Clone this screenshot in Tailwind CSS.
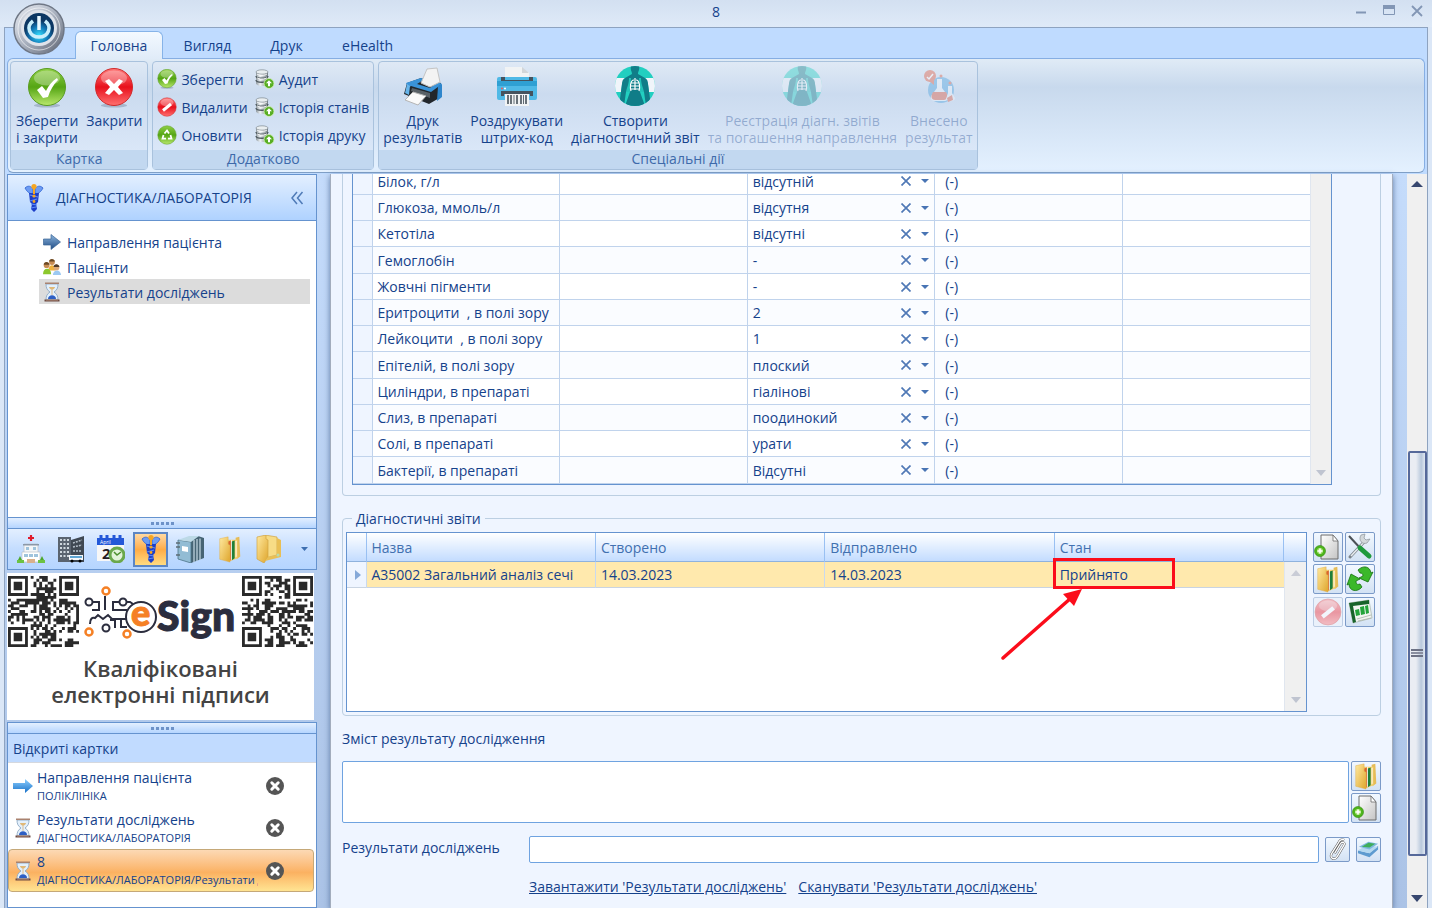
<!DOCTYPE html>
<html lang="uk">
<head>
  <meta charset="UTF-8" />
  <meta name="viewport" content="width=device-width, initial-scale=1.0"/>
  <title>8</title>
  <script src="https://cdn.jsdelivr.net/npm/@tailwindcss/browser@4"></script>
</head>
<body class="h-screen overflow-hidden flex flex-col bg-[#dbe7f7] text-[#15428b] text-sm leading-[17px] font-['Open_Sans','Noto_Sans',sans-serif]">

  <!-- Shared icons -->
  <svg class="absolute size-0" aria-hidden="true">
    <defs>
      <linearGradient id="gGreen" x2="0" y2="1"><stop offset="0" stop-color="#8fcf45"/><stop offset=".5" stop-color="#55a514"/><stop offset="1" stop-color="#b9e86c"/></linearGradient>
      <linearGradient id="gRed" x2="0" y2="1"><stop offset="0" stop-color="#ff7a7a"/><stop offset=".5" stop-color="#e8101c"/><stop offset="1" stop-color="#ff7070"/></linearGradient>
      <linearGradient id="gBlue" x2="0" y2="1"><stop offset="0" stop-color="#8db5dd"/><stop offset="1" stop-color="#1f4c85"/></linearGradient>
      <linearGradient id="gSky" x2="0" y2="1"><stop offset="0" stop-color="#8fd0ff"/><stop offset="1" stop-color="#1670c8"/></linearGradient>
      <linearGradient id="gGold" x2="1" y2="1"><stop offset="0" stop-color="#ffe9a0"/><stop offset="1" stop-color="#dfa62c"/></linearGradient>
      <linearGradient id="gPage" x2="1" y2="1"><stop offset="0" stop-color="#fff"/><stop offset="1" stop-color="#c4c4c4"/></linearGradient>
      <linearGradient id="gSteel" x2="1"><stop offset="0" stop-color="#8d979d"/><stop offset=".35" stop-color="#eef2f4"/><stop offset="1" stop-color="#6f7a80"/></linearGradient>
      <linearGradient id="gOrb" x2="1" y2="1"><stop offset="0" stop-color="#eef1f7"/><stop offset=".5" stop-color="#a9b1bf"/><stop offset="1" stop-color="#5d6472"/></linearGradient>
      <radialGradient id="gCore" cy=".75"><stop offset="0" stop-color="#35e0ff"/><stop offset=".6" stop-color="#1277b5"/><stop offset="1" stop-color="#0c3763"/></radialGradient>
      <clipPath id="round"><circle cx="20" cy="20" r="20"/></clipPath>
    </defs>
    <symbol id="ok" viewBox="0 0 40 40">
      <ellipse cx="20" cy="37.500" rx="13" ry="2" fill="#7d90a8" opacity=".5"/>
      <circle cx="20" cy="19" r="18.500" fill="url(#gGreen)" stroke="#5a9c22"/>
      <ellipse cx="20" cy="10" rx="13" ry="7.500" fill="#fff" opacity=".3"/>
      <path d="M10 22l5-4 4 5c3-6 6-10 11-13l1 2c-4 4-8 10-10 17l-5 1z" fill="#fff"/>
    </symbol>
    <symbol id="no" viewBox="0 0 40 40">
      <ellipse cx="20" cy="37.500" rx="13" ry="2" fill="#7d90a8" opacity=".5"/>
      <circle cx="20" cy="19" r="18.500" fill="url(#gRed)" stroke="#d02a2a"/>
      <ellipse cx="20" cy="10" rx="13" ry="7.500" fill="#fff" opacity=".3"/>
      <path d="M11 13l4-2 5 5 5-5 4 2-5 6 5 6-4 2-5-5-5 5-4-2 5-6z" fill="#fff"/>
    </symbol>
    <symbol id="ban" viewBox="0 0 40 40">
      <circle cx="20" cy="20" r="18.500" fill="url(#gRed)" stroke="#d02a2a"/>
      <ellipse cx="20" cy="11" rx="13" ry="7.500" fill="#fff" opacity=".3"/>
      <path d="M12 27L28 14" stroke="#fff" stroke-width="6"/>
    </symbol>
    <symbol id="recycle" viewBox="0 0 40 40">
      <circle cx="20" cy="20" r="18.500" fill="url(#gGreen)" stroke="#5a9c22"/>
      <g fill="none" stroke="#fff" stroke-width="3.500"><path d="M15 17l5-6 4 6"/><path d="M27 20l2 7h-7"/><path d="M18 27h-7l2-7"/></g>
    </symbol>
    <symbol id="db" viewBox="0 0 20 20">
      <path d="M1 3v11c0 4 12 4 12 0V3z" fill="url(#gSteel)"/>
      <ellipse cx="7" cy="3" rx="6" ry="2.200" fill="#e9eef0" stroke="#7f8a90" stroke-width=".7"/>
      <path d="M1 7c0 3 12 3 12 0M1 11c0 3 12 3 12 0" fill="none" stroke="#4d585e" stroke-width="1.300"/>
      <path d="M2 8.500c1 2 9 2 10 0M2 4.800c1 2 9 2 10 0" fill="none" stroke="#fff"/>
      <circle cx="14" cy="14.500" r="5" fill="#58ae24" stroke="#d8f3c0" stroke-width=".8"/>
      <path d="M14 11.200l3 3h-2v3h-2v-3h-2z" fill="#fff"/>
    </symbol>
    <symbol id="printer" viewBox="0 0 40 40">
      <path d="M4 17l14-5 20 5v14l-12 7L1 28z" fill="#22272c"/>
      <path d="M3 17l15-5 4 1-8 5 13 4 8-6 4 2-11 8-20-6-3 2z" fill="#3a93d8"/>
      <path d="M35 20l4-2v13l-5 4z" fill="#2e86cc"/>
      <path d="M24 3l10-1 3 14-10 5-9-4z" fill="#f3f3f3" stroke="#c4c4c4"/>
      <path d="M9 22l18 5v5L8 25z" fill="#596167"/>
      <path d="M10 26l13 4-8 9-13-5z" fill="#fafafa" stroke="#b5b5b5"/>
      <path d="M4 18l-2 9 4 2 1-9z" fill="#66b4ea"/>
    </symbol>
    <symbol id="barcode" viewBox="0 0 40 40">
      <path d="M8 1h17v5h7v9H8z" fill="#f1f3f4"/><path d="M25 1l7 6h-7z" fill="#d2d6d9"/>
      <rect y="11" width="40" height="23" rx="2" fill="#4fb9e6"/>
      <rect y="15" width="40" height="5" fill="#2fa0d3"/>
      <path d="M4 11h4v3h24v-3h4v4H4zM4 25h32v5h-3v-2H7v2H4z" fill="#45535e"/>
      <circle cx="5" cy="22.500" r="1" fill="#ed5c5c"/><circle cx="8" cy="22.500" r="1" fill="#fff"/>
      <path d="M8 28h24v12H8z" fill="#f1f3f4"/>
      <path d="M11 29v9M14 29v9M20 29v9M24 29v9M29 29v9" stroke="#3c4850" stroke-width="1.500"/><path d="M17 29v9M26.500 29v9" stroke="#3c4850" stroke-width=".8"/>
    </symbol>
    <symbol id="xray" viewBox="0 0 40 40">
      <g clip-path="url(#round)">
        <path d="M0 0h40v40H0z" fill="#22cfc0"/><path d="M0 12h40v14H0z" fill="#f0f5fa"/>
        <path d="M10 12h20l3 6 1 8H6l1-8z" fill="#22c3b8"/>
        <path d="M16 0h8c1 4-1 5-1 8l7 4H10l7-4c0-3-2-4-1-8z" fill="#107d88"/>
        <path d="M10 12h4c0 6-2 9-3 14L9 40H4l3-22c0-3 1-5 3-6zM30 12h-4c0 6 2 9 3 14l2 14h5l-3-22c0-3-1-5-3-6z" fill="#107d88"/>
        <path d="M16 12h8l1 14 5 14H10l5-14z" fill="#107d88"/>
        <g fill="none" stroke="#fff" stroke-width="1.200"><path d="M20 12v12M19 14c-4 0-4 8-3 11M21 14c4 0 4 8 3 11M16 17h8M15 20h10M16 23h8"/></g>
      </g>
    </symbol>
    <symbol id="flask" viewBox="0 0 40 40">
      <circle cx="22" cy="24" r="13" fill="#5aa9e0"/>
      <path d="M18 13h5v9l6 8c1 3-1 5-4 5h-9c-3 0-5-2-4-5l6-8z" fill="#eef4fb"/>
      <path d="M14 26h13c3 5 0 8-2 8h-9c-3 0-5-3-2-8z" fill="#e2684f"/>
      <path d="M29 20h4v7l3 5c0 4-7 4-9 1l2-6z" fill="#eef4fb"/><path d="M28 32l5-3 1 5-5 2z" fill="#e2684f"/>
      <circle cx="11" cy="10" r="6" fill="#e2684f"/><path d="M10 15l5 4v-7z" fill="#e2684f"/><path d="M8 11l2 2 4-5" fill="none" stroke="#fff" stroke-width="1.500"/>
      <circle cx="22" cy="10" r="1.500" fill="#e2684f"/><circle cx="31" cy="17" r="1.500" fill="#e2684f"/>
    </symbol>
    <symbol id="caduceus" viewBox="0 0 20 30">
      <path d="M1 5c3-3 6-2 8 1v5C6 11 3 9 1 5zM19 5c-3-3-6-2-8 1v5c3 0 6-2 8-6z" fill="#6c9bf3" stroke="#2a5fd0" stroke-width=".8"/>
      <path d="M5 10h10l-1 9-2 2 1 5-3 3-3-3 1-5-2-2z" fill="#1c3fc8"/>
      <path d="M6 12l8 2M6 18l7-2M7 21l6 1M7 25l5-1" stroke="#5f8cf5" stroke-width="1.200"/>
      <circle cx="10" cy="3.500" r="2.600" fill="#f5a623"/><path d="M9 5h2v6H9z" fill="#f5a623"/><circle cx="10" cy="13" r="1.600" fill="#f5a623"/><circle cx="10" cy="18.500" r="1.400" fill="#f5a623"/>
    </symbol>
    <symbol id="hourglass" viewBox="0 0 18 20">
      <path d="M3 2h12c0 4-1 6-4 8 3 2 4 4 4 8H3c0-4 1-6 4-8-3-2-4-4-4-8z" fill="#e3f0fc" stroke="#8fa9c4" stroke-width=".9"/>
      <path d="M6 5h6c0 1-1 2-3 3-2-1-3-2-3-3z" fill="#e0b878"/><path d="M9 8v5" stroke="#d9aa62" stroke-width=".7"/>
      <path d="M5 17c0-5 8-5 8 0z" fill="#2d5fc4"/>
      <path d="M2 .5h14v1.500H2z" fill="#a9826f"/><path d="M1.500 17.500h15v2h-15z" fill="#6c4a42"/><path d="M3 17.800h12v.6H3z" fill="#c99f88"/>
    </symbol>
    <symbol id="people" viewBox="0 0 20 18">
      <path d="M6 13c0-8 8-8 8 0z" fill="#f0b23e"/><circle cx="10" cy="3.500" r="3.200" fill="#c98d55"/><path d="M6.800 3c0-4 6-4 6.400 0z" fill="#6b4a25"/>
      <path d="M0 17c0-8 9-8 9 0z" fill="#8cc82c"/><circle cx="4" cy="7" r="3.200" fill="#c98d55"/><path d="M.8 6.500c0-4 6-4 6.400 0z" fill="#6b4a25"/>
      <path d="M11 18c0-7 9-7 9 0z" fill="#9cc9f2"/><circle cx="15" cy="9.500" r="3.200" fill="#dba877"/><path d="M11.800 9c0-4 6-4 6.400 0z" fill="#4e3a2a"/>
    </symbol>
    <symbol id="folder" viewBox="0 0 28 30">
      <path d="M20 3l4-1 1 21-4 3z" fill="#e6bc57"/><path d="M11 5h11v20l-8 3z" fill="#f3cf6c"/>
      <path d="M12 7l3-1v21l-3 1z" fill="#d9652c"/><path d="M15 6l1-1v21l-1 1z" fill="#fff"/><path d="M16 7l3-1v19l-3 2z" fill="#1f7f3a"/><path d="M20 7l1-1v17l-1 1z" fill="#fff"/>
      <path d="M3 4l9-2v8l2 1v18L3 26z" fill="url(#gGold)" stroke="#e0b04a" stroke-width=".5"/>
    </symbol>
    <symbol id="addpage" viewBox="0 0 28 28">
      <path d="M7 2h12l5 6v18H7z" fill="url(#gPage)" stroke="#6d6d6d"/><path d="M19 2v6h5z" fill="#fff" stroke="#6d6d6d" stroke-width=".8"/>
      <circle cx="6" cy="18" r="5.500" fill="#4fb51c" stroke="#2f8a0c" stroke-width=".6"/><circle cx="6" cy="18" r="3" fill="#a7e375"/><path d="M3.500 18h5M6 15.500v5" stroke="#fff" stroke-width="1.600"/>
    </symbol>
    <symbol id="closecard" viewBox="0 0 18 18">
      <circle cx="9" cy="9" r="9" fill="#555"/><path d="M5.800 5.800l6.400 6.400M12.200 5.800l-6.400 6.400" stroke="#fff" stroke-width="3" stroke-linecap="round"/>
    </symbol>
  </svg>

  <!-- Title bar -->
  <header class="relative h-[27px] shrink-0 flex items-center justify-center bg-linear-to-b from-[#d3e0f1] to-[#dfeaf8]">
    <h1 class="pb-1">8</h1>
    <div class="absolute right-[7px] top-1 flex items-center gap-3 text-[#8296b5]">
      <button aria-label="Згорнути" class="w-4 h-3.5"><svg viewBox="0 0 16 14"><path d="M3 8.500h10" stroke="currentColor" stroke-width="2"/></svg></button>
      <button aria-label="Розгорнути" class="w-4 h-3.5"><svg viewBox="0 0 16 14"><path d="M2.500 1.500h11v9h-11z" fill="none" stroke="currentColor"/><path d="M2 1h12v4H2z" fill="currentColor"/></svg></button>
      <button aria-label="Закрити вікно" class="w-4 h-3.5"><svg viewBox="0 0 16 14"><path d="M3 2l10 10M13 2L3 12" stroke="currentColor" stroke-width="1.800"/></svg></button>
    </div>
    <!-- Application button -->
    <button aria-label="Меню" class="absolute left-[13px] top-[3px] z-10 size-[52px]">
      <svg viewBox="0 0 52 52">
        <circle cx="26" cy="26" r="25" fill="url(#gOrb)" stroke="#6f7785" stroke-width="1.500"/>
        <circle cx="26" cy="26" r="21" fill="none" stroke="#fff" stroke-width="1" opacity=".6"/>
        <circle cx="26" cy="25" r="18" fill="#dfe3ea"/>
        <circle cx="26" cy="25" r="15" fill="url(#gCore)"/>
        <path d="M20 18c-8 6-3 16 6 16s14-10 6-16" fill="none" stroke="#c9effc" stroke-width="3.500"/>
        <path d="M26 13v14" stroke="#e8f8ff" stroke-width="3.500"/>
      </svg>
    </button>
  </header>

  <div class="flex-1 min-h-0 flex flex-col mx-1 border-t border-x border-[#8ea3c0] bg-[#bfdbff]">
    <!-- Tabs -->
    <nav class="h-[30px] shrink-0 flex items-end pl-[70px]">
      <button class="relative z-10 -mb-px w-[88px] h-7 rounded-t-md border border-b-0 border-[#86b3e8] bg-linear-to-b from-[#f3f9ff] to-[#e0ebf8]">Головна</button>
      <button class="w-[89px] h-7 pt-0.5">Вигляд</button>
      <button class="w-[69px] h-7 pt-0.5">Друк</button>
      <button class="w-[93px] h-7 pt-0.5">eHealth</button>
    </nav>

    <!-- Ribbon -->
    <section class="mx-0.5 h-[115px] shrink-0 flex gap-1 p-0.5 rounded-md border border-[#86aee3] border-b-[#7f9fc6] bg-linear-to-b from-[#e0ebf6] from-0% via-[#c8d9ed] via-25% to-[#e4f1ff]">
      <div class="flex flex-col rounded border border-[#a9c2dd] bg-linear-to-b from-[#dfe9f5] via-[#cbdbef] via-30% to-[#dfebfb]">
        <div class="flex-1 flex gap-2 px-[5px] pt-1.5">
          <button class="flex flex-col items-center text-left"><svg class="size-10 mb-1"><use href="#ok"/></svg>Зберегти<br>і закрити</button>
          <button class="flex flex-col items-center"><svg class="size-10 mb-1"><use href="#no"/></svg>Закрити</button>
        </div>
        <h2 class="h-[19px] text-center bg-[#c2d8f0] text-[#3e6aaa]">Картка</h2>
      </div>
      <div class="flex flex-col rounded border border-[#a9c2dd] bg-linear-to-b from-[#dfe9f5] via-[#cbdbef] via-30% to-[#dfebfb]">
        <div class="flex-1 grid grid-cols-[auto_auto] content-start gap-x-[7px] px-1 pt-[3px]">
          <button class="h-7 flex items-center gap-1"><svg class="size-5"><use href="#ok"/></svg>Зберегти</button>
          <button class="h-7 flex items-center gap-1"><svg class="size-5"><use href="#db"/></svg>Аудит</button>
          <button class="h-7 flex items-center gap-1"><svg class="size-5"><use href="#ban"/></svg>Видалити</button>
          <button class="h-7 flex items-center gap-1"><svg class="size-5"><use href="#db"/></svg>Історія станів</button>
          <button class="h-7 flex items-center gap-1"><svg class="size-5"><use href="#recycle"/></svg>Оновити</button>
          <button class="h-7 flex items-center gap-1"><svg class="size-5"><use href="#db"/></svg>Історія друку</button>
        </div>
        <h2 class="h-[19px] text-center bg-[#c2d8f0] text-[#3e6aaa]">Додатково</h2>
      </div>
      <div class="flex flex-col rounded border border-[#a9c2dd] bg-linear-to-b from-[#dfe9f5] via-[#cbdbef] via-30% to-[#dfebfb]">
        <div class="flex-1 flex gap-2 px-1 pt-1">
          <button class="flex flex-col items-center"><svg class="size-10 mb-1.5"><use href="#printer"/></svg>Друк<br>результатів</button>
          <button class="flex flex-col items-center"><svg class="size-10 mb-1.5"><use href="#barcode"/></svg>Роздрукувати<br>штрих-код</button>
          <button class="flex flex-col items-center"><svg class="size-10 mb-1.5"><use href="#xray"/></svg>Створити<br>діагностичний звіт</button>
          <button disabled class="flex flex-col items-center text-[#15428b]/35"><svg class="size-10 mb-1.5 opacity-40"><use href="#xray"/></svg>Реєстрація діагн. звітів<br>та погашення направлення</button>
          <button disabled class="flex flex-col items-center text-[#15428b]/35"><svg class="size-10 mb-1.5 opacity-45"><use href="#flask"/></svg>Внесено<br>результат</button>
        </div>
        <h2 class="h-[19px] text-center bg-[#c2d8f0] text-[#3e6aaa]">Спеціальні дії</h2>
      </div>
    </section>

    <div class="flex-1 min-h-0 mt-px flex bg-linear-to-b from-[#c5dcfb] to-[#abc3e6]">
      <!-- Sidebar -->
      <aside class="w-[310px] shrink-0 ml-0.5 flex flex-col">
        <div class="h-[47px] shrink-0 flex items-center pl-4 pr-3 border border-[#6593cf] bg-linear-to-b from-[#e3efff] to-[#afd2ff]">
          <svg class="w-5 h-[30px]"><use href="#caduceus"/></svg>
          <h2 class="ml-3 flex-1">ДІАГНОСТИКА/ЛАБОРАТОРІЯ</h2>
          <button aria-label="Згорнути панель"><svg class="size-3.5" viewBox="0 0 14 14"><path d="M7 1L2 7l5 6M12.500 1l-5 6 5 6" fill="none" stroke="#4f7bb8" stroke-width="1.500"/></svg></button>
        </div>
        <ul class="h-[296px] shrink-0 pt-2 pl-[31px] pr-1.5 bg-white border-x border-[#6593cf]">
          <li><a href="#" class="h-[25px] flex items-center gap-1.5 pl-1 pt-px"><svg class="w-[18px] h-4" viewBox="0 0 18 16"><path d="M.5 5H8V.5L17.500 8 8 15.500V11H.5z" fill="url(#gBlue)" stroke="#3b6596" stroke-width=".7"/></svg>Направлення пацієнта</a></li>
          <li><a href="#" class="h-[25px] flex items-center gap-1.5 pl-1 pt-px"><svg class="w-[18px] h-[18px]"><use href="#people"/></svg>Пацієнти</a></li>
          <li><a href="#" class="h-[25px] flex items-center gap-1.5 pl-1 pt-px bg-[#dcdcdc]"><svg class="w-[18px] h-5"><use href="#hourglass"/></svg>Результати досліджень</a></li>
        </ul>
        <div class="h-[11px] shrink-0 flex items-center justify-center gap-0.5 border border-b-0 border-[#6593cf] bg-linear-to-b from-[#e3efff] to-[#b5d5ff]">
          <i class="size-[3px] bg-[#6d92c8]"></i><i class="size-[3px] bg-[#6d92c8]"></i><i class="size-[3px] bg-[#6d92c8]"></i><i class="size-[3px] bg-[#6d92c8]"></i><i class="size-[3px] bg-[#6d92c8]"></i>
        </div>
        <div class="h-[42px] shrink-0 flex items-center gap-1 pl-[5px] border border-[#6593cf] bg-linear-to-b from-[#e3efff] via-[#c4ddff] via-50% to-[#b5d5ff]">
          <button aria-label="Лікарня" class="size-9 p-1">
            <svg viewBox="0 0 28 28"><path d="M7 9h14v18H7z" fill="#f4f6f8" stroke="#b9c0c8" stroke-width=".7"/><path d="M5 17h18v10H5z" fill="#fff" stroke="#b9c0c8" stroke-width=".7"/><path d="M6 9h16v1.500H6z" fill="#8b98a8"/><path d="M9 12h3v3H9zM16 12h3v3h-3zM7 19h4v3H7zM12 19h4v3h-4zM17 19h4v3h-4z" fill="#9fc3dc"/><path d="M14 0v6M11 3h6" stroke="#e01c2c" stroke-width="2.200"/><path d="M0 27l3-6 3 6zM22 27l3-6 3 6z" fill="#4da82c"/><path d="M0 25h7v3H0zM21 25h7v3h-7z" fill="#6cc243"/><path d="M10 24h8v4h-8z" fill="#d9b08b"/></svg>
          </button>
          <button aria-label="Поліклініка" class="size-9 p-1">
            <svg viewBox="0 0 28 28"><path d="M1 2h13v25H1z" fill="#5a6470"/><path d="M14 5l13-4v26H14z" fill="#3f4852"/><path d="M3 5h9M3 9h9M3 13h9M3 17h9M3 21h9" stroke="#cfd8de" stroke-width="2" stroke-dasharray="2 1.500"/><path d="M16 8l9-3M16 12l9-2M16 16h9" stroke="#b3bec8" stroke-width="1.500" stroke-dasharray="2 1"/><path d="M12 20h14v5H12z" fill="#f4f7fa"/><path d="M13 22h12" stroke="#2c8ac4" stroke-width="1.500"/><circle cx="15" cy="26" r="1.500"/><circle cx="23" cy="26" r="1.500"/></svg>
          </button>
          <button aria-label="Розклад" class="size-9 p-1">
            <svg viewBox="0 0 28 28"><path d="M0 3h27v8H0z" fill="#2458d8"/><path d="M4 0v5M10 0v5M17 0v5M23 0v5" stroke="#2458d8" stroke-width="3"/><path d="M0 10h27v16H0z" fill="#f7f7f7"/><text x="5" y="24" font-size="15" font-weight="700" fill="#231c24">2</text><text x="3" y="9" font-size="5" fill="#fff">April</text><circle cx="20" cy="20" r="7" fill="#e2f3d8" stroke="#6aa84c" stroke-width="3"/><path d="M17 17l3 3 4-3" fill="none" stroke="#4b8f2c" stroke-width="1.500"/></svg>
          </button>
          <button aria-label="Діагностика" class="w-[35px] h-[35px] flex items-center justify-center border-2 border-[#5b86c4] bg-linear-to-b from-[#ffd9a0] via-[#ffac45] via-50% to-[#ffdb80]"><svg class="w-5 h-[30px]"><use href="#caduceus"/></svg></button>
          <button aria-label="Журнали" class="size-9 p-1">
            <svg viewBox="0 0 28 28"><path d="M9 4l13-3 6 2v20l-13 5z" fill="#466474"/><path d="M21 4v22M24 3.500V25M18 5v22" stroke="#c6dae4" stroke-width="1.200"/><path d="M2 5l13 2v21L2 24z" fill="#92bcd4" stroke="#4d7488" stroke-width=".8"/><path d="M2 5l11-4h10l-8 6z" fill="#bcd9e6"/><path d="M6 11l6 1v5l-6-1z" fill="#fff"/><path d="M0 8h4M0 12h4M0 20h4" stroke="#5c6c74" stroke-width="1.500"/></svg>
          </button>
          <button aria-label="Архів" class="size-9 p-1"><svg class="size-7"><use href="#folder"/></svg></button>
          <button aria-label="Папка" class="size-9 p-1">
            <svg viewBox="0 0 28 28"><path d="M9 0l12 2v18l-12 3z" fill="#f7dc86" stroke="#d0a444" stroke-width=".7"/><path d="M1 2l9-2v4l2 1v17l-4 6-7-4z" fill="url(#gGold)" stroke="#d0a444" stroke-width=".7"/><path d="M21 3l4 2v17l-16 4 3-4 9-2z" fill="#e9bf55"/><circle cx="22" cy="20" r="1.500" fill="#b4dcb0"/></svg>
          </button>
          <button aria-label="Ще" class="w-6 h-9 flex items-center justify-center"><svg class="w-[7px] h-1" viewBox="0 0 7 4"><path d="M0 0h7L3.500 4z" fill="#3e6fb0"/></svg></button>
        </div>
        <!-- eSign banner -->
        <div class="h-[147px] shrink-0 mt-[3px] mr-[3px] bg-white">
          <div class="flex items-center justify-between px-px pt-[3px]">
            <svg class="qr size-[71px]" viewBox="0 0 25 25" data-seed="7"></svg>
            <svg class="w-40 h-[71px]" viewBox="0 0 160 71">
              <g fill="none" stroke="#2b2d3e" stroke-width="2">
                <circle cx="60" cy="41" r="15"/><circle cx="8" cy="26" r="3.500"/><circle cx="42" cy="26" r="3.500"/><circle cx="25" cy="52" r="3.500"/>
                <path d="M12 26h6v8h-7M24 20v14M38 26h-6v8h14M9 48c0-5 2-7 5-6l3-3 5 4 5-4 4 4h14M29 44h5v8M40 43v8h6M45 26h4l3 2"/>
              </g>
              <g fill="none" stroke="#f58025" stroke-width="2.500"><circle cx="25" cy="15" r="3.500"/><circle cx="8" cy="56" r="3.500"/><circle cx="46" cy="58" r="3.500"/></g>
              <text x="50" y="50" font-size="36" font-weight="900" fill="#f58025" stroke="#f58025" font-family="Lato">e</text>
              <text x="76" y="55" font-size="41" font-weight="900" fill="#2b2d3e" stroke="#2b2d3e" font-family="Lato">Sign</text>
            </svg>
            <svg class="qr size-[71px]" viewBox="0 0 25 25" data-seed="23"></svg>
          </div>
          <p class="mt-2 text-center text-[22px] leading-[26px] font-semibold text-[#444]">Кваліфіковані<br>електронні підписи</p>
        </div>
        <div class="h-[11px] shrink-0 mt-0.5 flex items-center justify-center gap-0.5 border border-b-0 border-[#6593cf] bg-linear-to-b from-[#e3efff] to-[#b5d5ff]">
          <i class="size-[3px] bg-[#6d92c8]"></i><i class="size-[3px] bg-[#6d92c8]"></i><i class="size-[3px] bg-[#6d92c8]"></i><i class="size-[3px] bg-[#6d92c8]"></i><i class="size-[3px] bg-[#6d92c8]"></i>
        </div>
        <!-- Open cards -->
        <div class="flex-1 min-h-0 bg-white border border-[#6593cf]">
          <h2 class="h-[29px] px-[5px] flex items-center bg-[#c1dbff] border-b border-[#d5d8de]">Відкриті картки</h2>
          <ul class="pt-0.5">
            <li class="h-[42px] flex items-center pl-[5px] pr-8">
              <svg class="w-5 h-3.5 shrink-0" viewBox="0 0 20 14"><path d="M0 4h12V0l8 7-8 7v-4H0z" fill="url(#gSky)"/></svg>
              <a href="#" class="ml-1 flex-1 min-w-0">Направлення пацієнта<br><span class="text-[11px]">ПОЛІКЛІНІКА</span></a>
              <button aria-label="Закрити картку"><svg class="size-[18px]"><use href="#closecard"/></svg></button>
            </li>
            <li class="h-[42px] flex items-center pl-[5px] pr-8">
              <svg class="w-5 h-5 shrink-0"><use href="#hourglass"/></svg>
              <a href="#" class="ml-1 flex-1 min-w-0">Результати досліджень<br><span class="text-[11px]">ДІАГНОСТИКА/ЛАБОРАТОРІЯ</span></a>
              <button aria-label="Закрити картку"><svg class="size-[18px]"><use href="#closecard"/></svg></button>
            </li>
            <li class="h-[43px] mr-0.5 flex items-center pl-1 pr-[29px] rounded-sm border border-[#c5a878] bg-linear-to-b from-[#fcd9b4] via-[#fbb161] via-55% to-[#ffe492]">
              <svg class="w-5 h-5 shrink-0"><use href="#hourglass"/></svg>
              <a href="#" class="ml-1 mr-2 flex-1 min-w-0 overflow-hidden whitespace-nowrap">8<br><span class="text-[11px]">ДІАГНОСТИКА/ЛАБОРАТОРІЯ/Результати досліджень</span></a>
              <button aria-label="Закрити картку"><svg class="size-[18px]"><use href="#closecard"/></svg></button>
            </li>
          </ul>
        </div>
      </aside>

      <!-- Card content -->
      <main class="flex-1 min-w-0 ml-[13px] mr-3.5 px-[11px] bg-[#eff5ff] border-x border-[#a3adbd] shadow-[0_2px_6px_#5f7ba6] flex flex-col">
        <section class="shrink-0 overflow-hidden border border-t-0 border-[#bccfe2] rounded-b px-[9px] pb-2.5">
          <div class="mr-[39px] flex border border-t-0 border-[#6593cf]">
            <div class="flex-1">
              <!-- scrolled down by a few pixels -->
              <table class="-mt-1.5 w-full table-fixed border-collapse bg-white">
                <colgroup><col class="w-[19px]"><col><col><col><col><col></colgroup>
                <tbody id="results"></tbody>
              </table>
            </div>
            <div class="w-[21px] flex flex-col justify-end items-center pb-2 border-l border-[#e0e6ef] bg-[#f0f0f0]">
              <svg class="w-2.5 h-1.5" viewBox="0 0 10 6"><path d="M0 0h10L5 6z" fill="#bfc4d0"/></svg>
            </div>
          </div>
        </section>

        <fieldset class="shrink-0 mt-3.5 border border-[#bccfe2] rounded pl-[3px] pr-[5px] pb-[3px]">
          <legend class="ml-1.5 px-1">Діагностичні звіти</legend>
          <div class="flex gap-1.5 mt-[5px]">
            <div class="flex-1 h-[180px] flex border border-[#6593cf] bg-white">
              <div class="flex-1">
                <table class="w-full table-fixed border-collapse">
                  <colgroup><col class="w-[19px]"><col><col><col><col></colgroup>
                  <thead>
                    <tr class="h-[29px] text-left text-[#4170b0] bg-linear-to-b from-white to-[#c3dcff] border-b border-[#8fb2dd]">
                      <th class="border-r border-[#99c0f2]"></th>
                      <th class="px-[5px] pt-0.5 font-normal border-r border-[#99c0f2]">Назва</th>
                      <th class="px-[5px] pt-0.5 font-normal border-r border-[#99c0f2]">Створено</th>
                      <th class="px-[5px] pt-0.5 font-normal border-r border-[#99c0f2]">Відправлено</th>
                      <th class="px-[5px] pt-0.5 font-normal border-r border-[#99c0f2]">Стан</th>
                    </tr>
                  </thead>
                  <tbody>
                    <tr class="h-[26px] bg-[#ffe9ad] border-b border-[#c9d4e2]">
                      <td class="bg-[#eff5ff] border-r border-[#c9d9ee]"><svg class="ml-2 w-1.5 h-2.5" viewBox="0 0 6 10"><path d="M0 0l6 5-6 5z" fill="#86a9d8"/></svg></td>
                      <td class="px-[5px] whitespace-nowrap border-r border-[#c9d9ee]">A35002 Загальний аналіз сечі</td>
                      <td class="px-[5px] border-r border-[#c9d9ee]">14.03.2023</td>
                      <td class="px-[5px] border-r border-[#c9d9ee]">14.03.2023</td>
                      <td class="relative px-[5px]">Прийнято
                        <!-- Callout -->
                        <span class="absolute -left-0.5 -top-1 w-[122px] h-[31px] border-3 border-[#fb0d1b]"></span>
                        <svg class="absolute -left-14 top-[27px] w-[84px] h-[74px]" viewBox="0 0 84 74"><path d="M4 69L72 9" stroke="#fb0d1b" stroke-width="3.500" stroke-linecap="round"/><path d="M83 0L75 17 64 5z" fill="#fb0d1b"/></svg>
                      </td>
                    </tr>
                  </tbody>
                </table>
              </div>
              <div class="w-[22px] flex flex-col">
                <div class="h-[29px] bg-linear-to-b from-white to-[#c3dcff] border-b border-[#8fb2dd]"></div>
                <div class="flex-1 flex flex-col justify-between items-center py-2 border-l border-[#e0e6ef] bg-[#f0f0f0]">
                  <svg class="w-2.5 h-1.5" viewBox="0 0 10 6"><path d="M0 6h10L5 0z" fill="#c9ccd6"/></svg>
                  <svg class="w-2.5 h-1.5" viewBox="0 0 10 6"><path d="M0 0h10L5 6z" fill="#bfc4d0"/></svg>
                </div>
              </div>
            </div>
            <div class="grid grid-cols-2 content-start gap-0.5">
              <button aria-label="Додати" class="size-[30px] rounded-xs border border-[#7b9ac8] bg-linear-to-b from-[#f2f8ff] to-[#d3e2f4]"><svg class="size-7"><use href="#addpage"/></svg></button>
              <button aria-label="Налаштування" class="size-[30px] rounded-xs border border-[#7b9ac8] bg-linear-to-b from-[#f2f8ff] to-[#d3e2f4]">
                <svg class="size-7" viewBox="0 0 28 28"><path d="M3 3l12 13" stroke="#4b5157" stroke-width="2"/><path d="M4 24L19 8" stroke="#7c858c" stroke-width="3" stroke-linecap="round"/><path d="M5 23L19 8" stroke="#e9edf0" stroke-width="1.500"/><path d="M15 2c-3 5 1 10 6 8l3-4-4 1-2-2 1-4z" fill="#d3d8db" stroke="#8a9299" stroke-width=".7"/><path d="M14 15l9 8" stroke="#1f9a3c" stroke-width="5" stroke-linecap="round"/></svg>
              </button>
              <button aria-label="Відкрити" class="size-[30px] rounded-xs border border-[#7b9ac8] bg-linear-to-b from-[#f2f8ff] to-[#d3e2f4]"><svg class="size-7"><use href="#folder"/></svg></button>
              <button aria-label="Оновити звіт" class="size-[30px] rounded-xs border border-[#7b9ac8] bg-linear-to-b from-[#f2f8ff] to-[#d3e2f4]">
                <svg class="size-7" viewBox="0 0 28 28"><g fill="#3bb82a" stroke="#14700e" stroke-width=".8"><path d="M12 5c5-5 12-4 13 3l2-1-5 10-9-4 4-2c0-2-1-3-3-3z"/><path d="M16 22c-5 6-13 4-13-3l-2 1 4-11 9 5-4 2c0 3 1 4 4 3z"/></g></svg>
              </button>
              <button disabled aria-label="Скасувати" class="mt-px size-[30px] rounded-xs border border-[#bccde4] bg-[#eaf1fb]"><svg class="size-7 opacity-40"><use href="#ban"/></svg></button>
              <button aria-label="Таблиця" class="mt-px size-[30px] rounded-xs border border-[#7b9ac8] bg-linear-to-b from-[#f2f8ff] to-[#d3e2f4]">
                <svg class="size-7" viewBox="0 0 28 28"><path d="M3 5l20-3 3 18-19 5z" fill="#f2f5f2" stroke="#9aa89a" stroke-width=".6"/><path d="M3 5l20-3v4L7 8l3 16-3 1z" fill="#17632a"/><path d="M9 12l4-1 1 6-4 1zM14 9l4-1 1 8-4 1zM19 8l3-1 1 8-3 1z" fill="#23a43a"/><path d="M11 21l14-4M12 23l13-3" stroke="#a9b3a9" stroke-width=".8"/></svg>
              </button>
            </div>
          </div>
        </fieldset>

        <label for="summary" class="mt-3.5 mb-3.5 block">Зміст результату дослідження</label>
        <div class="flex gap-0.5">
          <textarea id="summary" class="flex-1 h-[62px] resize-none bg-white border border-[#6fa3e0] rounded-xs"></textarea>
          <div class="flex flex-col gap-0.5">
            <button aria-label="Обрати шаблон" class="size-[30px] rounded-xs border border-[#7b9ac8] bg-linear-to-b from-[#f2f8ff] to-[#d3e2f4]"><svg class="size-7"><use href="#folder"/></svg></button>
            <button aria-label="Додати шаблон" class="size-[30px] rounded-xs border border-[#7b9ac8] bg-linear-to-b from-[#f2f8ff] to-[#d3e2f4]"><svg class="size-7"><use href="#addpage"/></svg></button>
          </div>
        </div>
        <div class="mt-[13px] flex items-center gap-1.5">
          <label for="file" class="w-[181px] pb-1">Результати досліджень</label>
          <input id="file" type="text" class="flex-1 h-[27px] bg-white border border-[#6fa3e0] rounded-xs">
          <button aria-label="Прикріпити" class="size-[25px] rounded-xs border border-[#7b9ac8] bg-linear-to-b from-[#f2f8ff] to-[#d3e2f4]">
            <svg viewBox="0 0 24 24"><path d="M9 16l6-10c2-3 5-1 4 1l-7 12c-3 5-9 2-6-3l7-11c1-3 4-4 6-3" fill="none" stroke="#555" stroke-width="2.400"/><path d="M9 16l6-10c2-3 5-1 4 1l-7 12c-3 5-9 2-6-3l7-11c1-3 4-4 6-3" fill="none" stroke="#fff" stroke-width="1.400"/></svg>
          </button>
          <button aria-label="Сканер" class="size-[25px] rounded-xs border border-[#7b9ac8] bg-linear-to-b from-[#f2f8ff] to-[#d3e2f4]">
            <svg viewBox="0 0 24 24"><path d="M1 13l12 3 9-8v4l-9 8-12-4z" fill="#5e9bd0"/><path d="M1 13l8-5 13 1-9 7z" fill="#b4d8f0"/><path d="M2 9l10-5 10 2-9 6z" fill="#7db7de"/><path d="M5 9l7-4 7 1-6 4z" fill="#3fae5a"/></svg>
          </button>
        </div>
        <div class="mt-[15px] pl-[187px] flex gap-3">
          <a href="#" class="underline">Завантажити 'Результати досліджень'</a>
          <a href="#" class="underline">Сканувати 'Результати досліджень'</a>
        </div>
      </main>

      <!-- Page scroll bar -->
      <div class="w-5 shrink-0 flex flex-col items-center bg-[#f0f0f0]">
        <div class="h-5 flex items-center"><svg class="w-3 h-1.5" viewBox="0 0 12 6"><path d="M0 6h12L6 0z" fill="#37476f"/></svg></div>
        <div class="flex-[258]"></div>
        <div class="flex-[404] w-[19px] flex items-center justify-center rounded-xs border-2 border-[#56699a] bg-linear-to-r from-[#eaedf3] from-40% via-[#b9c9dc] via-75% to-[#dfe7f1]">
          <div class="w-3 h-2 border-y-2 border-[#6d7285] flex items-center"><i class="w-full h-0.5 bg-[#8a8fa0]"></i></div>
        </div>
        <div class="flex-[32]"></div>
        <div class="h-5 flex items-center"><svg class="w-3 h-[7px]" viewBox="0 0 12 7"><path d="M0 0h12L6 7z" fill="#37476f"/></svg></div>
      </div>
    </div>
  </div>

  <script>
    const results = [
      ["Білок, г/л", "відсутній"],
      ["Глюкоза, ммоль/л", "відсутня"],
      ["Кетотіла", "відсутні"],
      ["Гемоглобін", "-"],
      ["Жовчні пігменти", "-"],
      ["Еритроцити \u00a0, в полі зору", "2"],
      ["Лейкоцити \u00a0, в полі зору", "1"],
      ["Епітелій, в полі зору", "плоский"],
      ["Циліндри, в препараті", "гіалінові"],
      ["Слиз, в препараті", "поодинокий"],
      ["Солі, в препараті", "урати"],
      ["Бактерії, в препараті", "Відсутні"],
    ];

    document.getElementById("results").innerHTML = results.map(([name, value]) => `
      <tr class="h-[26px] nth-[4n]:h-[27px] even:bg-[#fafcff] border-b border-[#c0d3ec]">
        <td class="bg-[#eff5ff] border-r border-[#c0d3ec]"></td>
        <td class="px-[5px] pt-px whitespace-nowrap border-r border-[#c0d3ec]">${name}</td>
        <td class="border-r border-[#c0d3ec]"></td>
        <td class="pt-px border-r border-[#c0d3ec]">
          <div class="flex items-center gap-2.5 px-[5px]">
            <span class="flex-1">${value}</span>
            <button aria-label="Очистити"><svg class="size-2.5" viewBox="0 0 10 10"><path d="M.5.5l9 9M9.500.5l-9 9" stroke="#5079b6" stroke-width="1.700"/></svg></button>
            <button aria-label="Обрати"><svg class="w-2 h-1" viewBox="0 0 8 4"><path d="M0 0h8L4 4z" fill="#4874b4"/></svg></button>
          </div>
        </td>
        <td class="px-2.5 pt-px border-r border-[#c0d3ec]">(-)</td>
        <td></td>
      </tr>`).join("");

    // QR codes in the banner
    document.querySelectorAll(".qr").forEach((svg) => {
      let seed = Number(svg.dataset.seed);
      let d = "";
      const n = 25;
      for (let y = 0; y < n; y++) {
        for (let x = 0; x < n; x++) {
          seed = (seed * 1103515245 + 12345) % 2147483648;
          const corner = (x < 8 && y < 8) || (x > n - 9 && y < 8) || (x < 8 && y > n - 9);
          if (!corner && (seed >> 16) % 100 < 52) d += `M${x} ${y}h1v1h-1z`;
        }
      }
      for (const [x, y] of [[0, 0], [n - 7, 0], [0, n - 7]]) {
        d += `M${x} ${y}h7v7h-7zM${x + 1} ${y + 1}v5h5v-5zM${x + 2} ${y + 2}h3v3h-3z`;
      }
      svg.innerHTML = `<path d="${d}" fill="#2a2a2a"/>`;
    });
  </script>
</body>
</html>
